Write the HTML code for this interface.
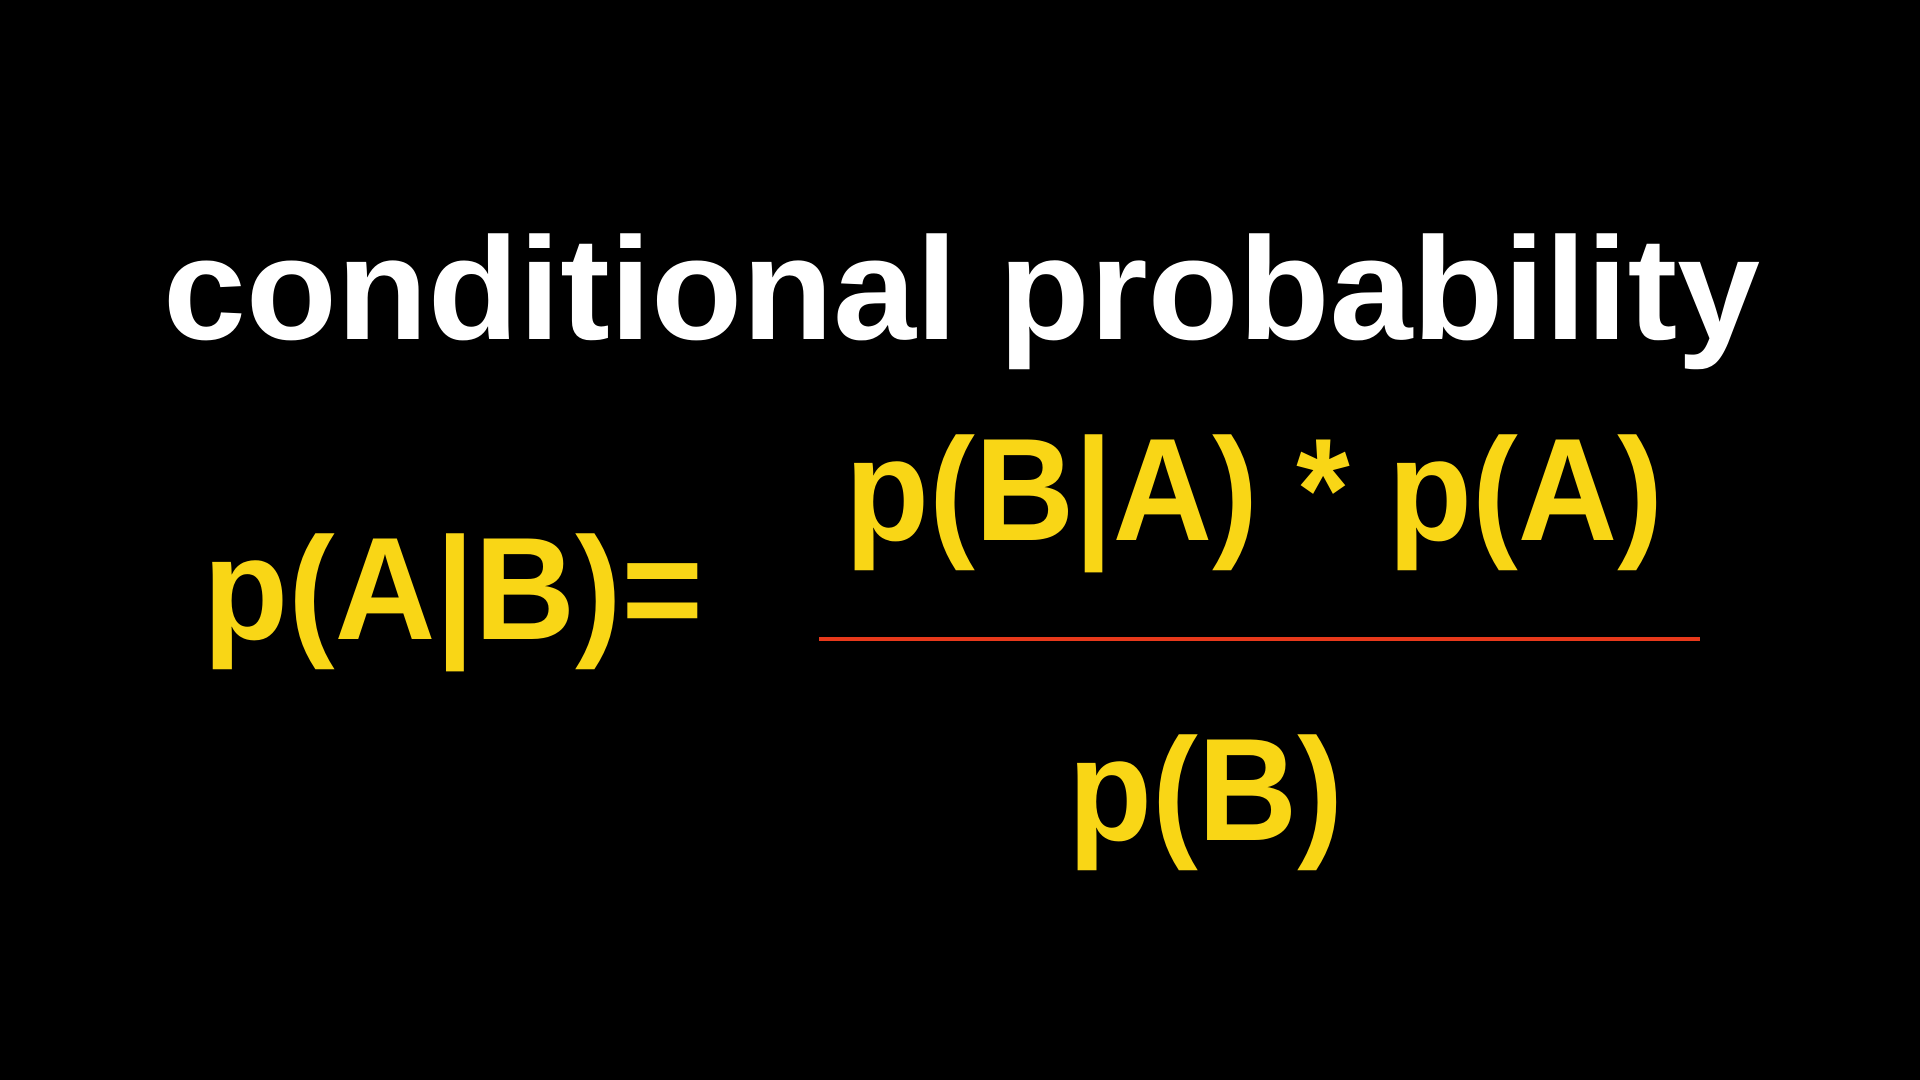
<!DOCTYPE html>
<html><head><meta charset="utf-8"><style>
html,body{margin:0;padding:0;background:#000;width:1920px;height:1080px;overflow:hidden}
svg{display:block}
text{font-family:"Liberation Sans",sans-serif;font-weight:bold}
</style></head><body>
<svg width="1920" height="1080" viewBox="0 0 1920 1080">
<rect width="1920" height="1080" fill="#000"/>
<text x="163" y="339" font-size="146" fill="#fff" textLength="1597" lengthAdjust="spacingAndGlyphs">conditional probability</text>
<text x="203" y="639" font-size="146" fill="#f9d616" textLength="500" lengthAdjust="spacingAndGlyphs">p(A|B)=</text>
<text x="845" y="540" font-size="146" fill="#f9d616" textLength="818" lengthAdjust="spacingAndGlyphs">p(B|A) * p(A)</text>
<rect x="819" y="637" width="881" height="4" fill="#e8391b"/>
<text x="1068" y="840" font-size="146" fill="#f9d616" textLength="275" lengthAdjust="spacingAndGlyphs">p(B)</text>
</svg>
</body></html>
